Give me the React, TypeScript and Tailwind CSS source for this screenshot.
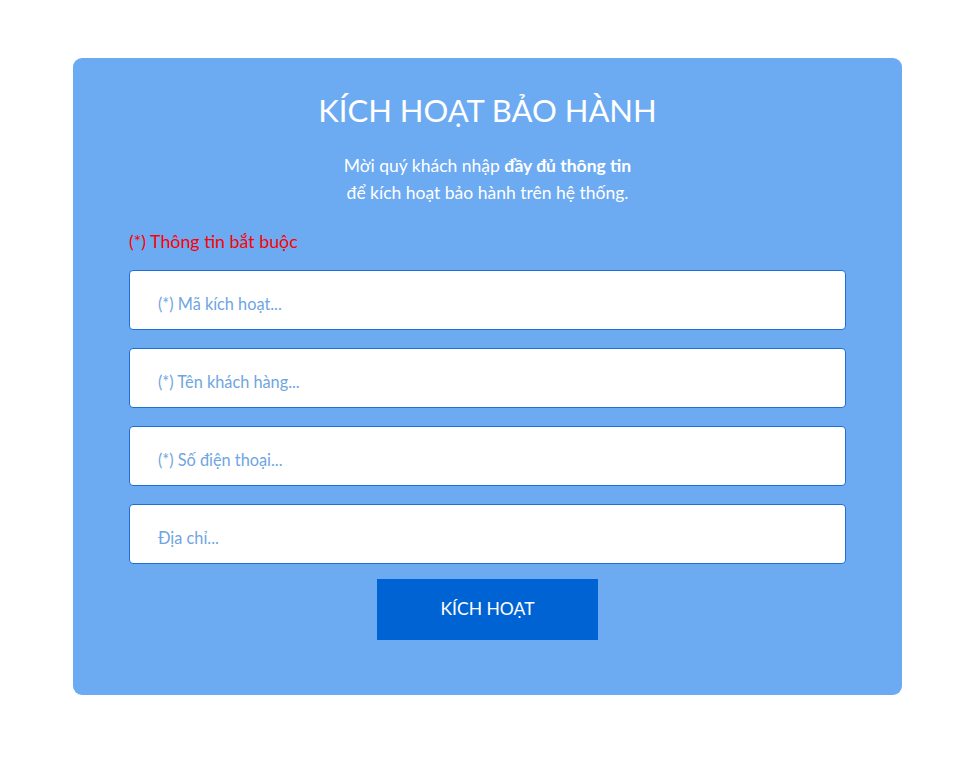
import React, { useState } from 'react'

const fields = [
  { name: 'code', placeholder: '(*) Mã kích hoạt...' },
  { name: 'name', placeholder: '(*) Tên khách hàng...' },
  { name: 'phone', placeholder: '(*) Số điện thoại...' },
  { name: 'address', placeholder: 'Địa chỉ...' },
]

export default function App() {
  const [values, setValues] = useState<Record<string, string>>({})

  return (
    <div className="min-h-[776px] bg-white pt-[58px] pl-[73px] font-['Lato','Noto_Sans',sans-serif]">
      <div className="w-[829px] rounded-[9px] bg-[#6caaf2] px-[56px] pt-[30px] pb-[55px]">
        <h1 className="text-center text-[31px] leading-[44px] font-normal text-white">
          KÍCH HOẠT BẢO HÀNH
        </h1>
        <p className="mt-[20px] text-center text-[17.5px] leading-[27px] text-white">
          Mời quý khách nhập <b className="font-bold">đầy đủ thông tin</b>
          <br />
          để kích hoạt bảo hành trên hệ thống.
        </p>
        <div className="mt-[23px] text-[17.8px] leading-[24px] text-[#ff0000]">(*) Thông tin bắt buộc</div>
        <form className="mt-[17px] flex flex-col gap-[18px]" onSubmit={(e) => e.preventDefault()}>
          {fields.map((f) => (
            <input
              key={f.name}
              value={values[f.name] || ''}
              onChange={(e) => setValues({ ...values, [f.name]: e.target.value })}
              placeholder={f.placeholder}
              className="h-[60px] w-full rounded-[4px] border border-[#1e6fd6] bg-white px-[28px] pt-[7px] text-[16.3px] text-[#333] outline-none placeholder:text-[#6fa5e2]"
            />
          ))}
          <div className="-mt-[3px] flex justify-center">
            <button
              type="submit"
              className="h-[61px] w-[221px] bg-[#0063d3] text-[17.5px] text-white"
            >
              KÍCH HOẠT
            </button>
          </div>
        </form>
      </div>
    </div>
  )
}
